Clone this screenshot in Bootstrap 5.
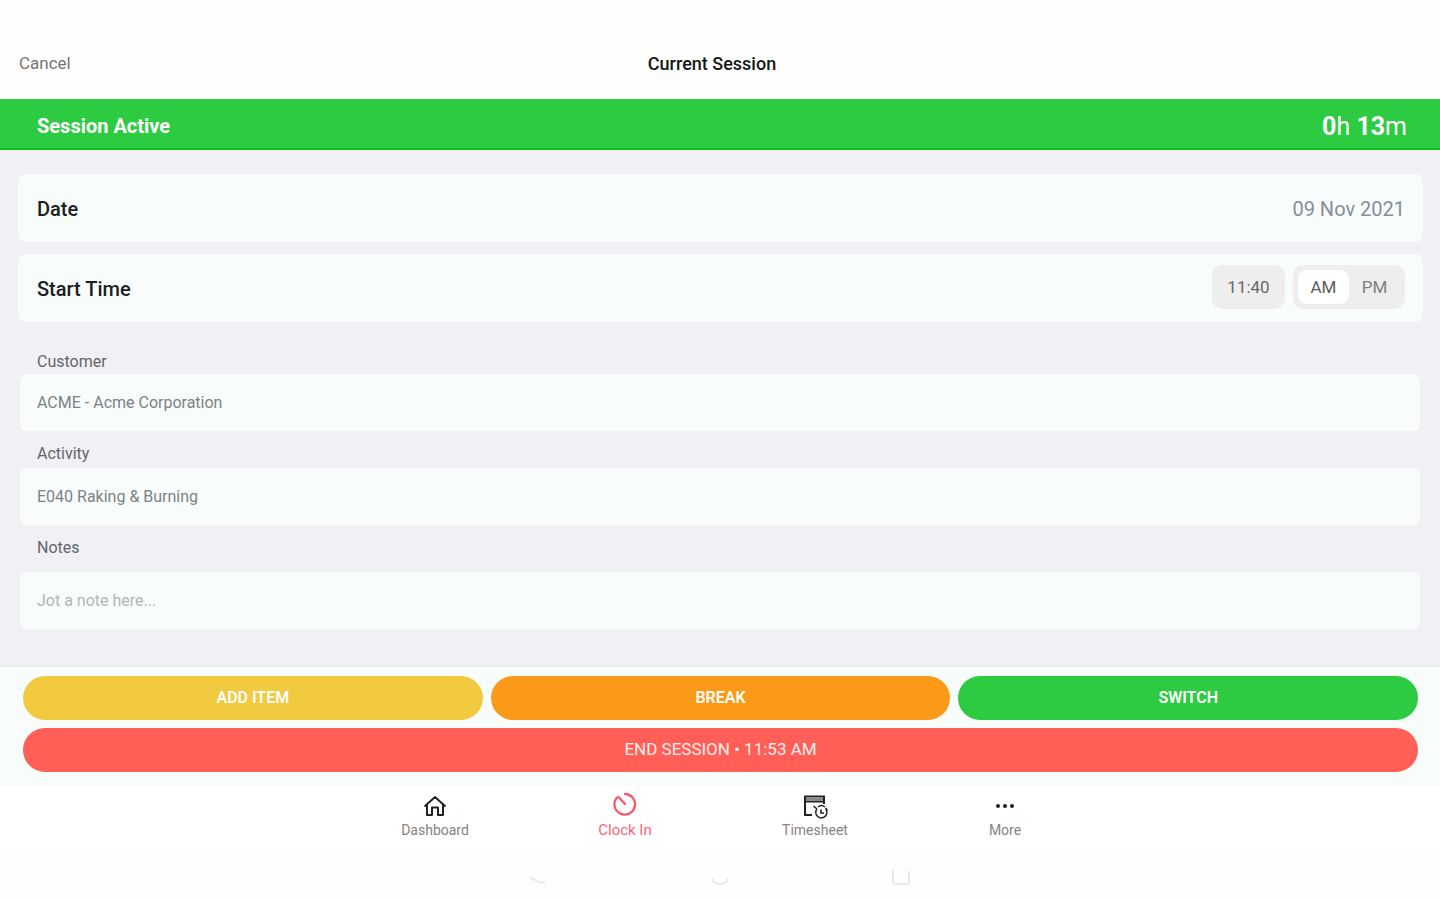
<!DOCTYPE html>
<html lang="en">
<head>
<meta charset="utf-8">
<meta name="viewport" content="width=device-width, initial-scale=1">
<title>Current Session</title>
<link href="https://cdn.jsdelivr.net/npm/bootstrap@5.3.0/dist/css/bootstrap.min.css" rel="stylesheet">
<style>
  body { font-family: Roboto, "Liberation Sans", sans-serif; background: #fdfefd; color: #1b2024; }
  .top-bar { display: grid; grid-template-columns: 1fr auto 1fr; padding: 28px 35px 0 19px; height: 99px; font-size: 17px; }
  .top-bar a { color: #747474; font-size: 17px; }
  .top-bar h1 { font-size: 18px; font-weight: 500; color: #161616; }
  .status-bar { background: #2dcb41; border-bottom: 2px solid #12bd1c; padding: 4px 33px 0 37px; height: 51px; font-size: 20px; color: #fff; }
  .elapsed { font-size: 25px; padding-top: 2px; }
  .session-form { background: #f1f0f5; padding: 24px 17px 36px 18px; }
  .info-row { background: #f8fcfb; border-radius: 8px; height: 68px; padding: 2px 18px 0 19px; margin-bottom: 12px; font-size: 20px; }
  .info-row .row-title { font-weight: 500; }
  .info-row .date-value { color: #868e98; font-size: 20px; width: 160px; }
  .bare { border: 0; outline: 0; background: transparent; padding: 0; }
  .time-controls { margin-bottom: 4px; }
  .time-box { background: #eee; border: 0; border-radius: 10px; width: 73px; height: 44px; font-size: 17px; color: #686868; }
  .ampm { background: #eee; border-radius: 10px; padding: 5px; height: 44px; }
  .ampm .btn { width: 51px; height: 34px; padding: 0; line-height: 34px; border: 0; border-radius: 9px; font-size: 17px; color: #7d7d7d; }
  .ampm .btn-check:checked + .btn { background: #fff; color: #5c5c5c; }
  .fields { padding: 16px 3px 0 2px; }
  .fields label { font-size: 16px; line-height: 24px; color: #63656a; padding-left: 17px; }
  .fields .label-near { padding-top: 11px; padding-bottom: 2px; }
  .fields .label-far { padding-top: 11px; padding-bottom: 12px; }
  .entry { background: #f8fcfb; border: 0; border-radius: 8px; height: 57px; padding: 0 17px; font-size: 16px; color: #7b8384; }
  .entry:focus { background: #f8fcfb; }
  .entry::placeholder { color: #b0b7b7; }
  .actions { background: #f8fcfb; border-top: 2px solid #e6eae9; padding: 9px 22px 14px 23px; }
  .actions .btn { height: 44px; border: 0; border-radius: 22px; color: #fff; font-size: 16px; font-weight: 600; padding: 0; }
  .btn-add { background: #f2ca40; }
  .btn-break { background: #fb9a18; }
  .btn-switch { background: #2dcb41; }
  .actions .btn-end { background: #ff5f57; font-size: 17px; font-weight: 400; color: #fff0ee; }
  .tab-bar { background: #fff; height: 62px; }
  .tab-bar a { width: 190px; font-size: 14px; line-height: 18px; color: #848484; padding-top: 6px; }
  .tab-bar a.active { color: #f8657a; font-size: 15px; }
  .tab-bar svg { width: 28px; height: 28px; color: #222; margin-bottom: 1px; }
  .tab-bar a.active svg { color: #f55a6e; }
  .system-bar { height: 52px; }
  .system-bar button { width: 181px; color: #e8eae9; padding-top: 6px; }
</style>
</head>
<body>
<header class="top-bar align-items-center">
  <a href="#" class="text-decoration-none">Cancel</a>
  <h1 class="m-0">Current Session</h1>
</header>
<div class="status-bar d-flex align-items-center justify-content-between">
  <strong>Session Active</strong>
  <span class="elapsed"><b>0</b>h <b>13</b>m</span>
</div>
<main class="session-form">
  <div class="info-row d-flex align-items-center justify-content-between">
    <label class="row-title" for="date">Date</label>
    <input id="date" class="bare date-value text-end" type="text" value="09 Nov 2021">
  </div>
  <div class="info-row d-flex align-items-center justify-content-between">
    <label class="row-title" for="time">Start Time</label>
    <div class="time-controls d-flex">
      <input id="time" class="time-box text-center me-2" type="text" value="11:40">
      <div class="ampm d-flex" role="group" aria-label="AM or PM">
        <input type="radio" class="btn-check" name="half" id="am" checked>
        <label class="btn" for="am">AM</label>
        <input type="radio" class="btn-check" name="half" id="pm">
        <label class="btn" for="pm">PM</label>
      </div>
    </div>
  </div>
  <div class="fields">
    <label class="d-block" for="customer">Customer</label>
    <input id="customer" class="form-control entry" type="text" value="ACME - Acme Corporation">
    <label class="d-block label-near" for="activity">Activity</label>
    <input id="activity" class="form-control entry" type="text" value="E040 Raking &amp; Burning">
    <label class="d-block label-far" for="notes">Notes</label>
    <input id="notes" class="form-control entry" type="text" placeholder="Jot a note here...">
  </div>
</main>
<section class="actions">
  <div class="d-flex gap-2 mb-2">
    <button type="button" class="btn btn-add flex-fill w-100">ADD ITEM</button>
    <button type="button" class="btn btn-break flex-fill w-100">BREAK</button>
    <button type="button" class="btn btn-switch flex-fill w-100">SWITCH</button>
  </div>
  <button type="button" class="btn btn-end w-100">END SESSION • 11:53 AM</button>
</section>
<nav class="tab-bar d-flex justify-content-center">
  <a href="#" class="d-flex flex-column align-items-center text-decoration-none">
    <svg viewBox="0 0 28 28" fill="none" stroke="currentColor" stroke-width="2" stroke-linejoin="round"><path d="M3.500 14.500 14 5l10.500 9.500M6 12.500V23h5v-7.500h6V23h5V12.500"/></svg>Dashboard</a>
  <a href="#" class="active d-flex flex-column align-items-center text-decoration-none">
    <svg viewBox="0 0 28 28" fill="none" stroke="currentColor" stroke-width="2.300" stroke-linecap="round"><path d="M14 2A10.300 10.300 0 1 1 6 5.500M7.500 5 14 12"/></svg>Clock In</a>
  <a href="#" class="d-flex flex-column align-items-center text-decoration-none">
    <svg viewBox="0 0 28 28" fill="none" stroke="currentColor" stroke-width="2"><path d="M11 23H4V4.500h19V12M4 9.500h19"/><path stroke="#888" d="M5 7h17"/><path stroke-width="1.600" d="M12.500 14l3.500 3M16 17a5.500 5.500 0 1 0 9 .500M17 15q3.500-3 7 0M20 17.500V21h3M26.500 18.500 24.500 16"/></svg>Timesheet</a>
  <a href="#" class="d-flex flex-column align-items-center text-decoration-none">
    <svg viewBox="0 0 28 28" fill="currentColor"><circle cx="7" cy="14" r="2"/><circle cx="14" cy="14" r="2"/><circle cx="21" cy="14" r="2"/></svg>More</a>
</nav>
<div class="system-bar d-flex justify-content-center">
  <button type="button" class="bare" aria-label="Back"><svg width="20" height="20" fill="none" stroke="currentColor" stroke-width="2"><path d="M1 9l10 6 5-1"/></svg></button>
  <button type="button" class="bare" aria-label="Home"><svg width="20" height="20" fill="none" stroke="currentColor" stroke-width="2"><path d="M2 10a8 6 0 0 0 16 0"/></svg></button>
  <button type="button" class="bare" aria-label="Recent apps"><svg width="20" height="20" fill="none" stroke="currentColor" stroke-width="2"><path d="M2 2v12q0 2 2 2h14V3"/></svg></button>
</div>
<script src="https://cdn.jsdelivr.net/npm/bootstrap@5.3.0/dist/js/bootstrap.bundle.min.js"></script>
</body>
</html>
